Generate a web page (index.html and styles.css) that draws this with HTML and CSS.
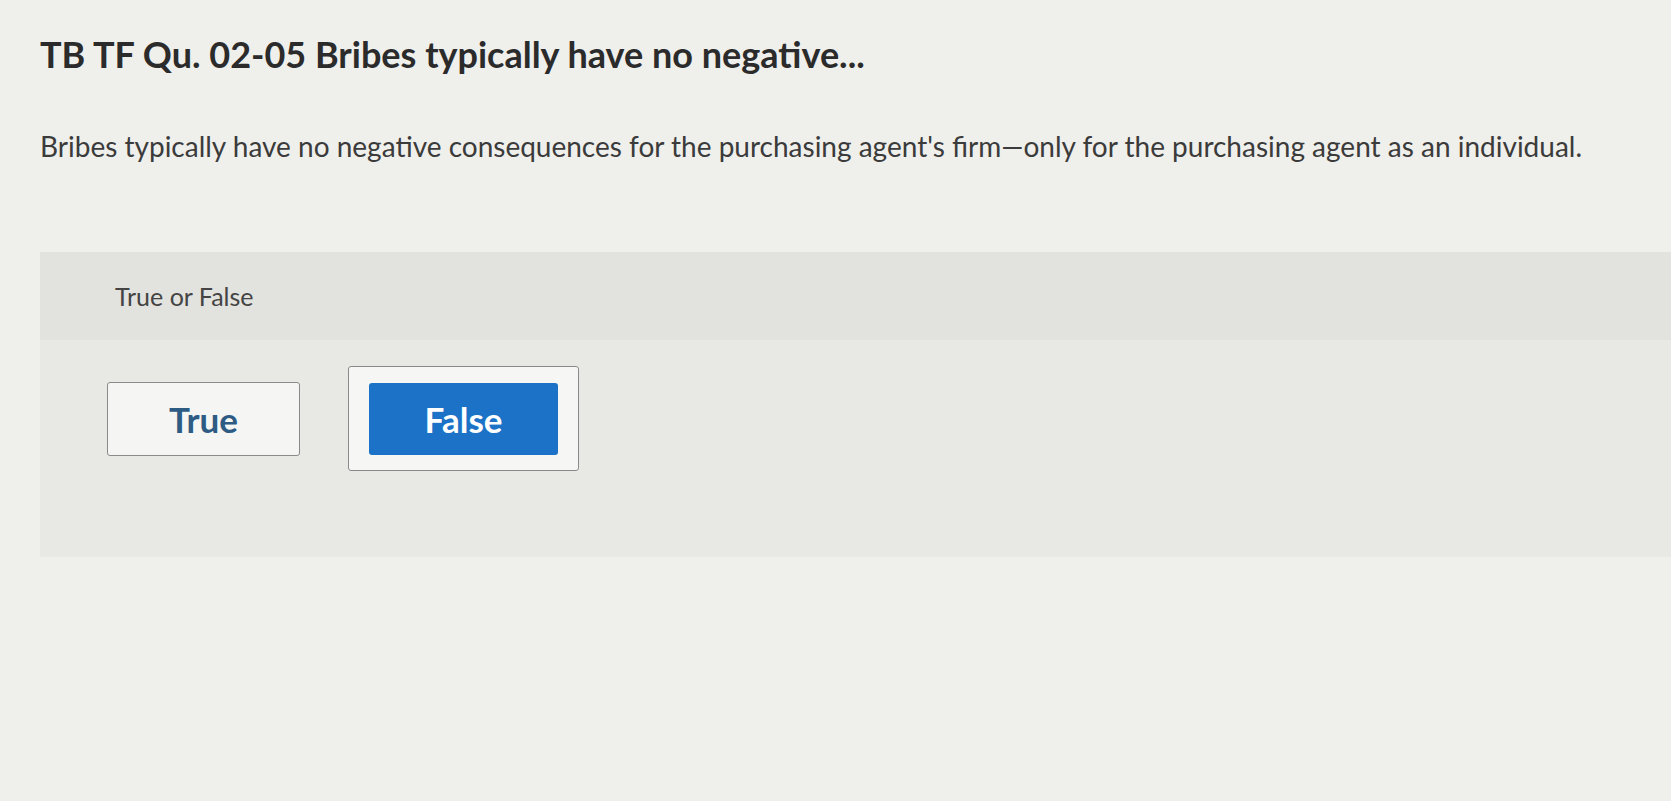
FILE: index.html
```html
<!DOCTYPE html>
<html lang="en">
<head>
    <meta charset="UTF-8">
    <meta name="viewport" content="width=device-width, initial-scale=1.0">
    <title>TB TF Qu. 02-05</title>
    <link rel="stylesheet" href="styles.css">
</head>
<body>

<main class="question">
    <h1 class="question-title">TB TF Qu. 02-05 Bribes typically have no negative...</h1>

    <p class="question-prompt">Bribes typically have no negative consequences for the purchasing agent's firm—only for the purchasing agent as an individual.</p>

    <section class="answer-panel">
        <div class="panel-head">True or False</div>
        <div class="panel-body">
            <button type="button" class="choice">True</button>
            <div class="choice-selected">
                <button type="button" class="choice choice-active">False</button>
            </div>
        </div>
    </section>
</main>

</body>
</html>
```

FILE: styles.css
```css
body {
    margin: 0;
    font-family: Lato, "Open Sans", sans-serif;
    background-color: #efefec;
    color: #333;
}
.question {
    padding: 30px 0 0 40px;
}
.question-title {
    margin: 0;
    font-size: 36px;
    font-weight: 700;
    color: #2b2b2b;
    line-height: 48px;
}
.question-prompt {
    margin: 52px 0 0;
    font-size: 28px;
    color: #3b3b3b;
    line-height: 32px;
}
.answer-panel {
    margin-top: 90px;
    background-color: #e8e8e5;
    height: 305px;
}
.panel-head {
    height: 88px;
    display: flex;
    align-items: center;
    padding-left: 75px;
    background-color: #e2e2df;
    font-size: 25px;
    color: #444;
}
.panel-body {
    display: flex;
    align-items: center;
    gap: 48px;
    padding: 26px 0 0 67px;
}
.choice {
    width: 193px;
    height: 74px;
    border: 1px solid #8a8a8a;
    border-radius: 3px;
    background-color: #f5f5f3;
    font-family: inherit;
    font-size: 35px;
    font-weight: 700;
    color: #2d5b84;
    cursor: pointer;
}
.choice-selected {
    padding: 16px 20px 15px 20px;
    border: 1px solid #8a8a8a;
    border-radius: 3px;
    background-color: #f6f6f4;
}
.choice-selected .choice {
    display: block;
}
.choice-active {
    width: 189px;
    height: 72px;
    border: none;
    background-color: #1b72c6;
    color: #fff;
}
```
